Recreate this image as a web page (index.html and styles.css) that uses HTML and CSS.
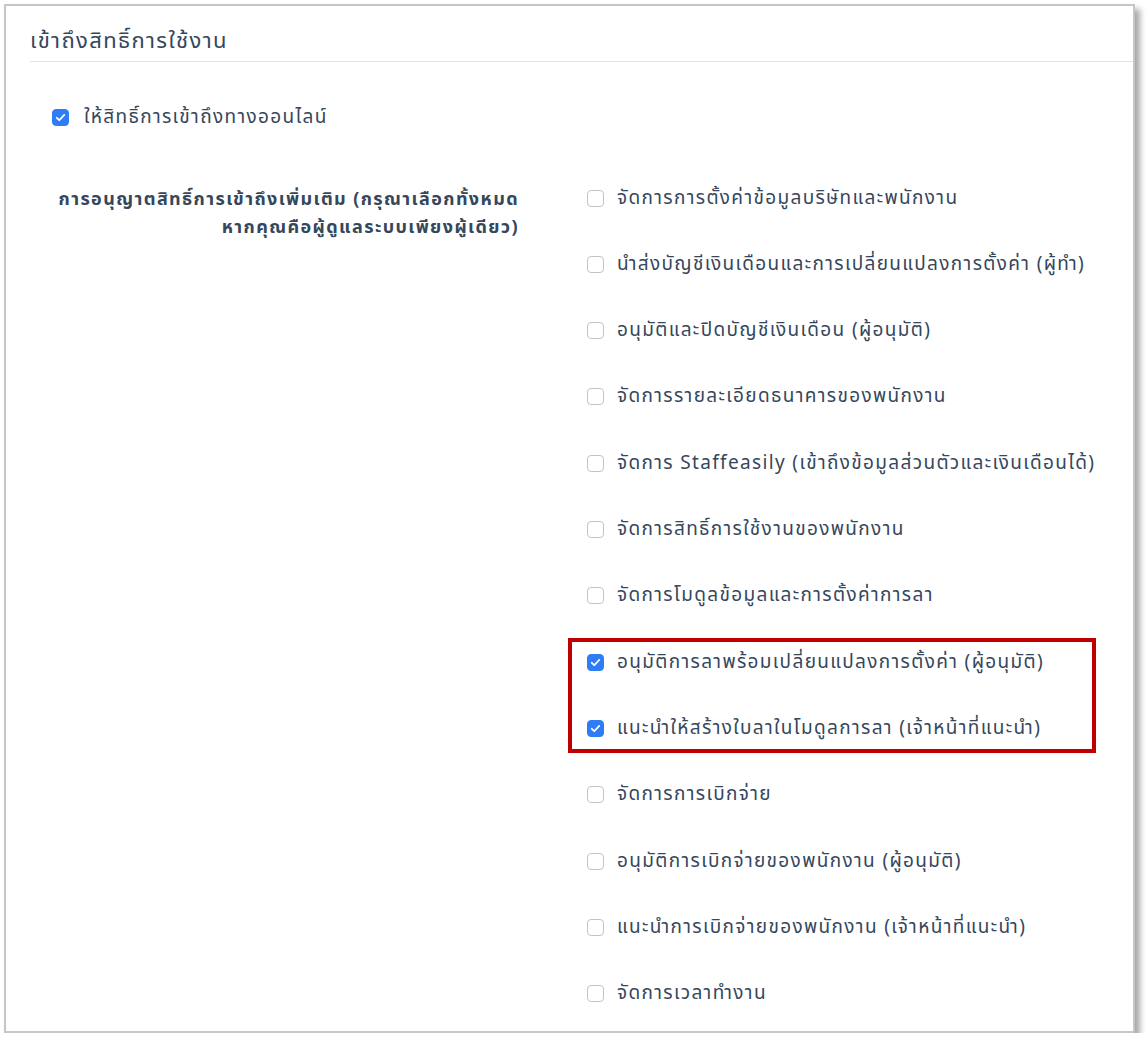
FILE: index.html
```html
<!DOCTYPE html>
<html lang="th">
<head>
    <meta charset="UTF-8">
    <title>เข้าถึงสิทธิ์การใช้งาน</title>
    <link rel="stylesheet" href="styles.css">
</head>
<body>
    <div class="panel">
        <div class="panel-header">เข้าถึงสิทธิ์การใช้งาน</div>

        <label class="check-row online">
            <span class="box checked"></span>
            <span>ให้สิทธิ์การเข้าถึงทางออนไลน์</span>
        </label>

        <div class="perm">
            <div class="perm-label">การอนุญาตสิทธิ์การเข้าถึงเพิ่มเติม (กรุณาเลือกทั้งหมด<br>หากคุณคือผู้ดูแลระบบเพียงผู้เดียว)</div>

            <div class="perm-list">
                <label class="check-row"><span class="box"></span><span>จัดการการตั้งค่าข้อมูลบริษัทและพนักงาน</span></label>
                <label class="check-row"><span class="box"></span><span>นำส่งบัญชีเงินเดือนและการเปลี่ยนแปลงการตั้งค่า (ผู้ทำ)</span></label>
                <label class="check-row"><span class="box"></span><span>อนุมัติและปิดบัญชีเงินเดือน (ผู้อนุมัติ)</span></label>
                <label class="check-row"><span class="box"></span><span>จัดการรายละเอียดธนาคารของพนักงาน</span></label>
                <label class="check-row"><span class="box"></span><span>จัดการ Staffeasily (เข้าถึงข้อมูลส่วนตัวและเงินเดือนได้)</span></label>
                <label class="check-row"><span class="box"></span><span>จัดการสิทธิ์การใช้งานของพนักงาน</span></label>
                <label class="check-row"><span class="box"></span><span>จัดการโมดูลข้อมูลและการตั้งค่าการลา</span></label>

                <!-- highlighted pair -->
                <div class="highlight">
                    <label class="check-row"><span class="box checked"></span><span>อนุมัติการลาพร้อมเปลี่ยนแปลงการตั้งค่า (ผู้อนุมัติ)</span></label>
                    <label class="check-row"><span class="box checked"></span><span>แนะนำให้สร้างใบลาในโมดูลการลา (เจ้าหน้าที่แนะนำ)</span></label>
                </div>

                <label class="check-row"><span class="box"></span><span>จัดการการเบิกจ่าย</span></label>
                <label class="check-row"><span class="box"></span><span>อนุมัติการเบิกจ่ายของพนักงาน (ผู้อนุมัติ)</span></label>
                <label class="check-row"><span class="box"></span><span>แนะนำการเบิกจ่ายของพนักงาน (เจ้าหน้าที่แนะนำ)</span></label>
                <label class="check-row"><span class="box"></span><span>จัดการเวลาทำงาน</span></label>
            </div>
        </div>
    </div>
</body>
</html>
```

FILE: styles.css
```css
body {
    margin: 0;
    background-color: #ffffff;
    font-family: 'Noto Sans', 'Noto Sans Thai', 'DejaVu Sans', sans-serif;
    color: #35475c;
}

.panel {
    box-sizing: border-box;
    margin: 4px 0 0 4px;
    width: 1131px;
    height: 1029px;
    border: 2px solid #c6c6c6;
    background-color: #ffffff;
    box-shadow: 5px 5px 6px rgba(0, 0, 0, 0.35);
}

.panel-header {
    margin-left: 24px;
    padding: 19px 0 8px;
    line-height: 28px;
    font-size: 22px;
    letter-spacing: 1.4px;
    border-bottom: 1px solid #e2e2e2;
}

.check-row {
    display: flex;
    align-items: center;
    height: 24px;
    font-size: 19px;
    letter-spacing: 1.35px;
    white-space: nowrap;
}

.box {
    box-sizing: border-box;
    flex: none;
    width: 17px;
    height: 17px;
    margin-right: 13px;
    border: 1px solid #c4c4c4;
    border-radius: 4px;
    background-color: #ffffff;
}

.box.checked {
    border-color: #2f7df6;
    background-color: #2f7df6;
    background-image: url("data:image/svg+xml,%3Csvg xmlns='http://www.w3.org/2000/svg' viewBox='0 0 17 17'%3E%3Cpath d='M4.3 8.8l2.8 2.8 5.6-6' fill='none' stroke='white' stroke-width='2' stroke-linecap='round' stroke-linejoin='round'/%3E%3C/svg%3E");
}

.online {
    margin: 43px 0 0 46px;
}

.online .box {
    margin-right: 15px;
}

.perm {
    display: flex;
    margin-top: 57px;
}

.perm-label {
    box-sizing: border-box;
    width: 513px;
    margin-top: -2px;
    text-align: right;
    font-size: 18px;
    letter-spacing: 1.4px;
    font-weight: bold;
    line-height: 28px;
}

.perm-list {
    display: flex;
    flex-direction: column;
    gap: 42.33px;
    margin-left: 68px;
}

.highlight {
    box-sizing: border-box;
    display: flex;
    flex-direction: column;
    gap: 42.33px;
    width: 528px;
    margin: -12px 0 -12px -19px;
    padding: 8px 0 8px 15px;
    border: 4px solid #c00000;
}
```
